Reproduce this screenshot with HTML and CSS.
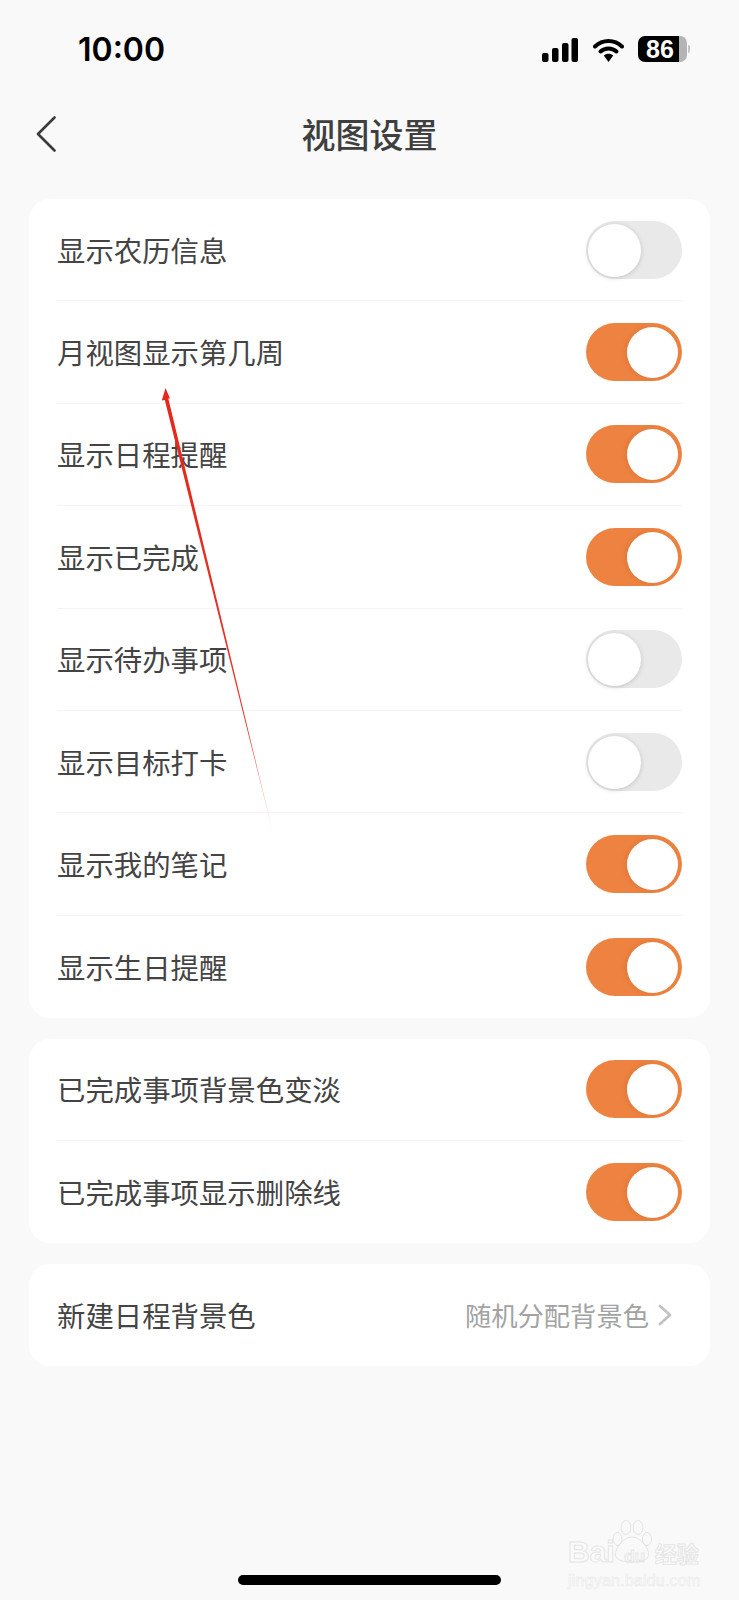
FILE: index.html
```html
<!DOCTYPE html>
<html lang="zh">
<head>
<meta charset="utf-8">
<title>视图设置</title>
<link rel="stylesheet" href="styles.css">
</head>
<body>
<div class="page">
  <div class="status">
    <span class="time">10:00</span>
    <div class="status-icons">
      <svg class="signal" viewBox="0 0 36 24"><rect x="0" y="15" width="6.5" height="9" rx="2"/><rect x="10" y="10" width="6.5" height="14" rx="2"/><rect x="20" y="5" width="6.5" height="19" rx="2"/><rect x="29.500" y="0" width="6.500" height="24" rx="2"/></svg>
      <svg class="wifi" viewBox="0 0 31 24"><path d="M2 8.500C9.500 1.200 21.500 1.200 29 8.500" fill="none" stroke="#000" stroke-width="4" stroke-linecap="round"/><path d="M7.500 13.500C12 9.400 19 9.400 23.500 13.500" fill="none" stroke="#000" stroke-width="4" stroke-linecap="round"/><path d="M10.800 17.600C13.400 15.200 17.600 15.200 20.200 17.600L15.500 24Z"/></svg>
      <div class="battery"><span class="battery-fill">86</span><span class="battery-rest"></span><span class="battery-nub"></span></div>
    </div>
  </div>
  <div class="nav">
    <svg class="back" viewBox="0 0 20 36"><path d="M18.500 1.500L2 18L18.500 34.500" fill="none" stroke="#3c3c3c" stroke-width="2.600" stroke-linecap="round" stroke-linejoin="round"/></svg>
    <h1 class="title">视图设置</h1>
  </div>
  <main class="content">
    <section class="card">
      <div class="row"><span class="label">显示农历信息</span><span class="toggle"></span></div>
      <div class="row"><span class="label">月视图显示第几周</span><span class="toggle on"></span></div>
      <div class="row"><span class="label">显示日程提醒</span><span class="toggle on"></span></div>
      <div class="row"><span class="label">显示已完成</span><span class="toggle on"></span></div>
      <div class="row"><span class="label">显示待办事项</span><span class="toggle"></span></div>
      <div class="row"><span class="label">显示目标打卡</span><span class="toggle"></span></div>
      <div class="row"><span class="label">显示我的笔记</span><span class="toggle on"></span></div>
      <div class="row"><span class="label">显示生日提醒</span><span class="toggle on"></span></div>
    </section>
    <section class="card">
      <div class="row"><span class="label">已完成事项背景色变淡</span><span class="toggle on"></span></div>
      <div class="row"><span class="label">已完成事项显示删除线</span><span class="toggle on"></span></div>
    </section>
    <section class="card">
      <div class="row"><span class="label">新建日程背景色</span>
        <span class="value">随机分配背景色<svg class="chev" viewBox="0 0 14 22"><path d="M2 2L12 11L2 20" fill="none" stroke="#c2c2c2" stroke-width="2.800" stroke-linecap="round" stroke-linejoin="round"/></svg></span>
      </div>
    </section>
  </main>
  <div class="home"><span class="home-bar"></span></div>

  <svg class="arrow" viewBox="0 0 739 1600" aria-hidden="true">
    <defs><linearGradient id="fade" gradientUnits="userSpaceOnUse" x1="165" y1="388" x2="273" y2="833"><stop offset="0" stop-color="#e6261b"/><stop offset=".75" stop-color="#e6352a"/><stop offset="1" stop-color="#e6352a" stop-opacity=".3"/></linearGradient></defs>
    <path d="M165.500 388L170 398.500L168.300 398.500L273 833L164.800 400L161.800 400.500Z" fill="url(#fade)"/>
  </svg>

  <div class="mark">
    <svg class="paw" viewBox="0 0 40 44"><g fill="none" stroke="#e4e4e4" stroke-width="1"><ellipse cx="5.500" cy="19" rx="4.500" ry="6.500"/><ellipse cx="14" cy="7.500" rx="5" ry="7"/><ellipse cx="26" cy="7.500" rx="5" ry="7"/><ellipse cx="35" cy="19" rx="4.500" ry="6.500"/><path d="M20 17C29 17 39 30 36 37C33 44 7 44 4 37C1 30 11 17 20 17Z"/></g></svg>
    <div class="mark-main"><span>Bai</span><span class="mark-du">du</span><span class="mark-cn">经验</span></div>
    <div class="mark-sub">jingyan.baidu.com</div>
  </div>
</div>
</body>
</html>
```
FILE: styles.css
```css
* { box-sizing: border-box; }
html, body { margin: 0; padding: 0; }
body {
  background: #f9f9f9;
  font-family: "Noto Sans CJK SC", "Noto Sans", sans-serif;
  color: #3a3a3a;
}
.page {
  position: relative;
  width: 739px;
  height: 1600px;
  overflow: hidden;
  display: flex;
  flex-direction: column;
}
.status {
  height: 98px;
  padding: 0 52px 0 78px;
  display: flex;
  align-items: flex-start;
  justify-content: space-between;
}
.time {
  margin-top: 29px;
  font-family: Inter, "Liberation Sans", sans-serif;
  font-size: 32px;
  line-height: 42px;
  font-weight: 600;
  color: #000;
}
.status-icons {
  margin-top: 36px;
  display: flex;
  align-items: center;
}
.signal { width: 36px; height: 24px; margin: 1px 15px 0 0; fill: #000; }
.wifi { width: 31px; height: 24px; margin: 1px 14px 0 0; fill: #000; }
.battery {
  position: relative;
  width: 49px;
  height: 26px;
  border-radius: 7px;
  display: flex;
}
.battery-fill {
  width: 41px;
  background: #000;
  border-radius: 7px 0 0 7px;
  color: #fff;
  font-family: "Liberation Sans", sans-serif;
  font-size: 25px;
  line-height: 26px;
  font-weight: 700;
  text-align: center;
  padding-left: 3px;
}
.battery-rest {
  width: 8px;
  background: #b4b4b4;
  border-radius: 0 7px 7px 0;
}
.battery-nub {
  position: absolute;
  right: -3px;
  top: 9px;
  width: 2px;
  height: 8px;
  background: #c4c4c4;
  border-radius: 0 2px 2px 0;
}
.nav {
  height: 101px;
  padding: 0 37px;
  position: relative;
  display: flex;
  align-items: center;
  justify-content: center;
}
.back {
  position: absolute;
  left: 36px;
  top: 18px;
  width: 20px;
  height: 36px;
}
.title {
  margin: 0 0 29px;
  font-size: 34px;
  line-height: 44px;
  font-weight: 500;
  color: #3f3f3f;
}
.content {
  flex: 1;
  padding: 0 29px;
  display: flex;
  flex-direction: column;
  gap: 20.5px;
}
.card {
  background: #fff;
  border-radius: 21px;
  padding: 0 28px;
}
.row {
  height: 102.4px;
  display: flex;
  align-items: center;
  justify-content: space-between;
  border-bottom: 1px solid #f4f4f4;
}
.row:last-child { border-bottom: 0; }
.label {
  font-size: 28.4px;
  line-height: 40px;
  color: #444;
}
.toggle {
  position: relative;
  flex: none;
  width: 96px;
  height: 58px;
  border-radius: 29px;
  background: #e9e9e9;
}
.toggle::after {
  content: "";
  position: absolute;
  left: 2px;
  top: 3px;
  width: 53px;
  height: 53px;
  border-radius: 50%;
  background: #fff;
  box-shadow: 0 1px 5px rgba(0, 0, 0, .16);
}
.toggle.on { background: #ee8341; }
.toggle.on::after {
  left: 41px;
  top: 4px;
  width: 51px;
  height: 51px;
  box-shadow: -2px 0 5px rgba(150, 70, 20, .18);
}
.value {
  display: flex;
  align-items: center;
  gap: 9px;
  margin-right: 10px;
  font-size: 26.3px;
  line-height: 40px;
  color: #a3a3a3;
}
.chev { width: 14px; height: 22px; }
.home {
  height: 25px;
  flex: none;
  display: flex;
  justify-content: center;
}
.home-bar {
  width: 263px;
  height: 10px;
  border-radius: 5px;
  background: #000;
}
.arrow {
  position: absolute;
  left: 0;
  top: 0;
  width: 739px;
  height: 1600px;
  pointer-events: none;
}
.mark {
  position: absolute;
  left: 568px;
  top: 1520px;
  width: 135px;
  color: #fafafa;
}
.paw {
  position: absolute;
  left: 44px;
  top: 0;
  width: 40px;
  height: 44px;
}
.mark-main {
  margin-top: 17px;
  display: flex;
  align-items: baseline;
  font-family: "Liberation Sans", sans-serif;
  font-size: 30px;
  line-height: 30px;
  font-weight: 700;
  color: #fbfbfb;
  -webkit-text-stroke: 1px #e6e6e6;
}
.mark-du { width: 40px; text-align: center; font-size: 17px; }
.mark-cn { font-family: "Noto Sans CJK SC", sans-serif; font-size: 22px; }
.mark-sub {
  font-family: "Liberation Sans", sans-serif;
  font-size: 16px;
  line-height: 18px;
  letter-spacing: .2px;
  color: #fbfbfb;
  -webkit-text-stroke: .5px #e8e8e8;
}
```
